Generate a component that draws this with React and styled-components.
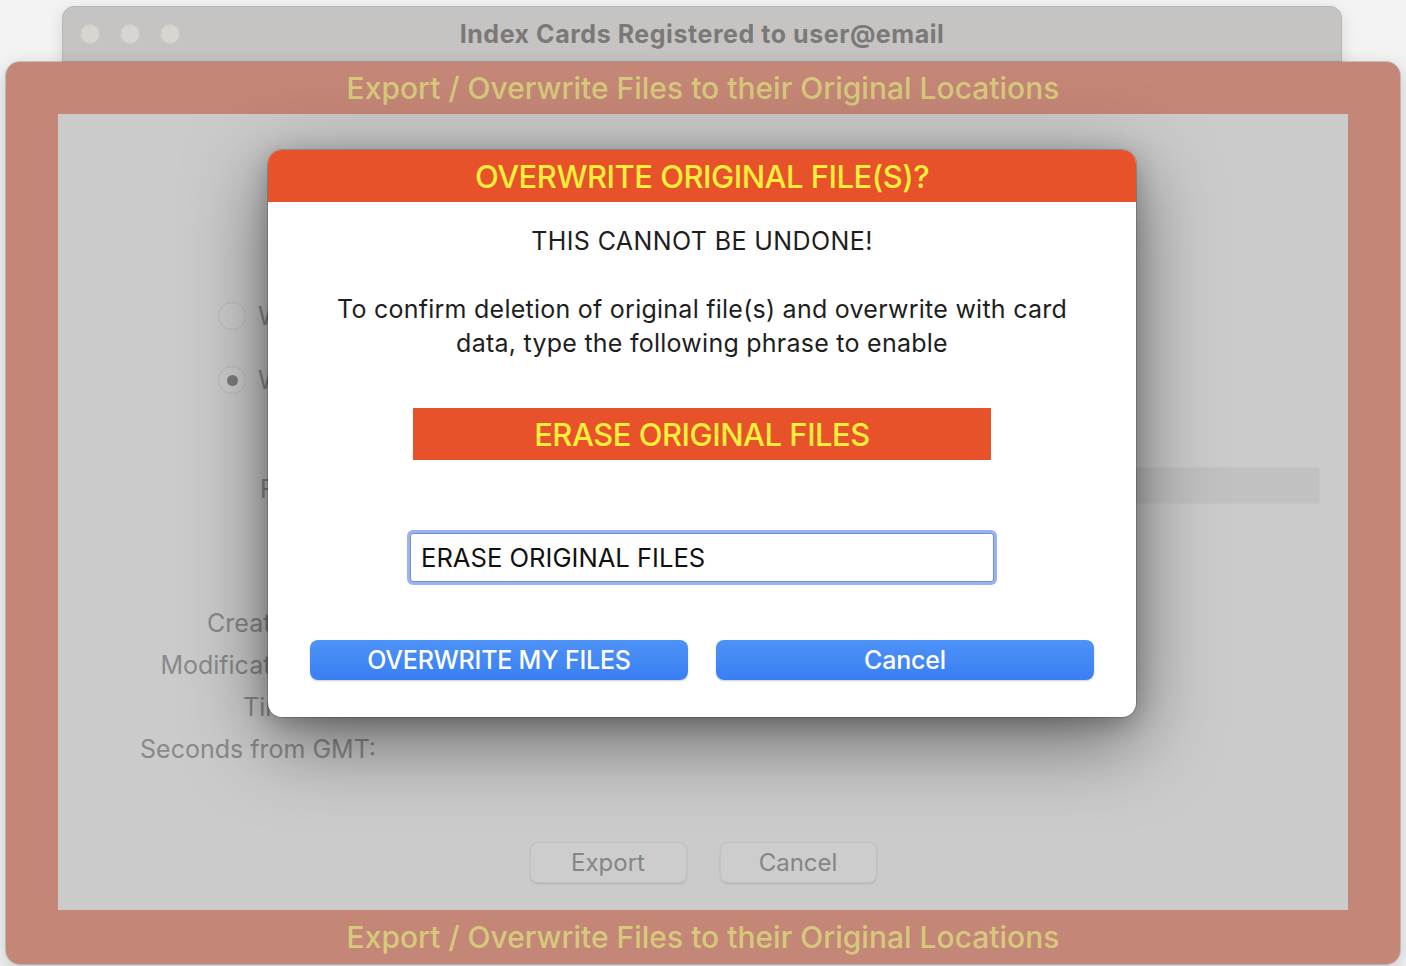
import React, { useState } from "react";
import styled, { createGlobalStyle } from "styled-components";

const GlobalStyle = createGlobalStyle`
  html, body {
    margin: 0;
    padding: 0;
    background: #f3f3f3;
  }
  body {
    font-family: "Inter", "Helvetica Neue", Arial, sans-serif;
    -webkit-font-smoothing: antialiased;
  }
  * { box-sizing: border-box; }
`;

const Desktop = styled.div`
  position: relative;
  width: 1406px;
  height: 966px;
  overflow: hidden;
  background: #f3f3f3;
`;

const BackWindow = styled.div`
  position: absolute;
  left: 62px;
  top: 6px;
  width: 1280px;
  height: 140px;
  background: #c6c4c2;
  border: 1px solid #b9b7b5;
  border-radius: 12px;
  box-shadow: 0 4px 16px rgba(0, 0, 0, 0.12);
`;

const TitleBar = styled.div`
  height: 55px;
  display: grid;
  grid-template-columns: 1fr auto 1fr;
  align-items: center;
  border-bottom: 1px solid #b3b1af;
`;

const Lights = styled.div`
  display: flex;
  gap: 20px;
  padding-left: 17px;
`;

const Light = styled.span`
  width: 20px;
  height: 20px;
  border-radius: 50%;
  background: #d9d5d1;
  border: 1px solid #cdc9c5;
`;

const WindowTitle = styled.div`
  font-size: 25px;
  font-weight: 700;
  color: #7b7977;
  letter-spacing: 0.55px;
`;

const FrontWindow = styled.div`
  position: absolute;
  left: 6px;
  top: 62px;
  width: 1394px;
  height: 902px;
  background: #c48676;
  border-radius: 14px;
  box-shadow: 0 0 0 1px rgba(120, 120, 120, 0.35), 0 6px 20px rgba(0, 0, 0, 0.2);
  display: flex;
  flex-direction: column;
  overflow: hidden;
`;

const Band = styled.div`
  height: ${p => p.h}px;
  flex-shrink: 0;
  display: flex;
  align-items: center;
  justify-content: center;
  font-size: 30px;
  font-weight: 500;
  color: #d6c97b;
  letter-spacing: 0px;
`;

const Panel = styled.div`
  position: relative;
  flex: 1;
  margin: 0 52px;
  background: #cbcbcb;
  color: #898989;
  font-size: 25px;
`;

const RadioRow = styled.div`
  display: flex;
  align-items: center;
  gap: 12px;
  margin-left: 160px;
  height: 28px;
  margin-top: ${p => p.top}px;
`;

const Radio = styled.span`
  width: 28px;
  height: 28px;
  border-radius: 50%;
  border: 1.5px solid #bdbdbd;
  background: #cdcdcd;
  display: flex;
  align-items: center;
  justify-content: center;
  &::after {
    content: "";
    display: ${p => (p.checked ? "block" : "none")};
    width: 11px;
    height: 11px;
    border-radius: 50%;
    background: #7c7c7c;
  }
`;

const FieldRow = styled.div`
  display: flex;
  align-items: center;
  margin-top: 73px;
  height: 36px;
  padding-left: 202px;
  gap: 16px;
`;

const FieldLabel = styled.span`
  margin-top: 8px;
`;

const Field = styled.div`
  flex: 1;
  height: 36px;
  margin-right: 28px;
  background: #c1c1c1;
  border: 1px solid #c6c6c6;
  box-shadow: 0 1px 0 #c4c4c4;
`;

const InfoGrid = styled.div`
  display: grid;
  grid-template-columns: 318px 1fr;
  row-gap: 12px;
  margin-top: 105px;
  line-height: 30px;
`;

const InfoLabel = styled.div`
  text-align: right;
  white-space: nowrap;
`;

const ButtonBar = styled.div`
  display: flex;
  justify-content: center;
  gap: 33px;
  margin-top: 78px;
`;

const GrayButton = styled.div`
  width: 157px;
  height: 41px;
  border-radius: 8px;
  background: #cdcdcd;
  border: 1px solid #c2c2c2;
  box-shadow: 0 1px 2px rgba(0, 0, 0, 0.12);
  display: flex;
  align-items: center;
  justify-content: center;
  color: #858585;
  font-size: 24px;
`;

const Sheet = styled.div`
  position: absolute;
  left: 210px;
  top: 36px;
  width: 868px;
  height: 567px;
  background: #ffffff;
  border-radius: 14px;
  overflow: hidden;
  box-shadow: 0 0 0 1px rgba(0, 0, 0, 0.18), 0 22px 80px rgba(0, 0, 0, 0.5),
    0 6px 24px rgba(0, 0, 0, 0.22);
  display: flex;
  flex-direction: column;
  align-items: center;
  color: #1e1e1e;
`;

const SheetHeader = styled.div`
  align-self: stretch;
  height: 52px;
  background: #e8522a;
  color: #fbee3c;
  font-size: 31px;
  font-weight: 500;
  display: flex;
  align-items: center;
  justify-content: center;
  letter-spacing: -0.5px;
`;

const Warning = styled.div`
  margin-top: 24px;
  font-size: 25px;
  line-height: 30px;
  letter-spacing: 0.4px;
`;

const Message = styled.div`
  margin-top: 36px;
  font-size: 25px;
  line-height: 34px;
  letter-spacing: 0.25px;
  text-align: center;
  width: 760px;
`;

const Phrase = styled.div`
  margin-top: 48px;
  width: 578px;
  height: 52px;
  background: #e8522a;
  color: #fbee3c;
  font-size: 31px;
  font-weight: 500;
  display: flex;
  align-items: center;
  justify-content: center;
  letter-spacing: -0.5px;
`;

const PhraseInput = styled.input`
  margin-top: 73px;
  width: 584px;
  height: 49px;
  border: 1px solid #6f8fd8;
  outline: none;
  border-radius: 3px;
  box-shadow: 0 0 0 3px #9ab2f2;
  padding: 0 10px;
  font-family: inherit;
  font-size: 25.6px;
  color: #111;
  background: #fff;
`;

const ActionBar = styled.div`
  margin-top: 58px;
  display: flex;
  gap: 28px;
`;

const BlueButton = styled.button`
  width: 378px;
  height: 40px;
  border: none;
  border-radius: 8px;
  background: linear-gradient(#4d93f7, #3a7ff3);
  box-shadow: 0 1px 2px rgba(0, 0, 0, 0.2);
  color: #fff;
  font-family: inherit;
  font-size: 25px;
  font-weight: 500;
  letter-spacing: -0.2px;
  cursor: pointer;
`;

const BAND_TEXT = "Export / Overwrite Files to their Original Locations";

const App = () => {
  const [phrase, setPhrase] = useState("ERASE ORIGINAL FILES");

  return (
    <Desktop>
      <GlobalStyle />
      <BackWindow>
        <TitleBar>
          <Lights>
            <Light />
            <Light />
            <Light />
          </Lights>
          <WindowTitle>Index Cards Registered to user@email</WindowTitle>
          <div />
        </TitleBar>
      </BackWindow>

      <FrontWindow>
        <Band h={52}>{BAND_TEXT}</Band>
        <Panel>
          <RadioRow top={188}>
            <Radio />
            <span>Write to a new folder</span>
          </RadioRow>
          <RadioRow top={36}>
            <Radio checked />
            <span>Write to original locations</span>
          </RadioRow>
          <FieldRow>
            <FieldLabel>Folder:</FieldLabel>
            <Field />
          </FieldRow>
          <InfoGrid>
            <InfoLabel>Creation Date:</InfoLabel>
            <div />
            <InfoLabel>Modification Date:</InfoLabel>
            <div />
            <InfoLabel>Time Zone:</InfoLabel>
            <div />
            <InfoLabel>Seconds from GMT:</InfoLabel>
            <div />
          </InfoGrid>
          <ButtonBar>
            <GrayButton>Export</GrayButton>
            <GrayButton>Cancel</GrayButton>
          </ButtonBar>

          <Sheet>
            <SheetHeader>OVERWRITE ORIGINAL FILE(S)?</SheetHeader>
            <Warning>THIS CANNOT BE UNDONE!</Warning>
            <Message>
              To confirm deletion of original file(s) and overwrite with card
              data, type the following phrase to enable
            </Message>
            <Phrase>ERASE ORIGINAL FILES</Phrase>
            <PhraseInput
              value={phrase}
              onChange={e => setPhrase(e.target.value)}
            />
            <ActionBar>
              <BlueButton>OVERWRITE MY FILES</BlueButton>
              <BlueButton>Cancel</BlueButton>
            </ActionBar>
          </Sheet>
        </Panel>
        <Band h={54}>{BAND_TEXT}</Band>
      </FrontWindow>
    </Desktop>
  );
};

export default App;
